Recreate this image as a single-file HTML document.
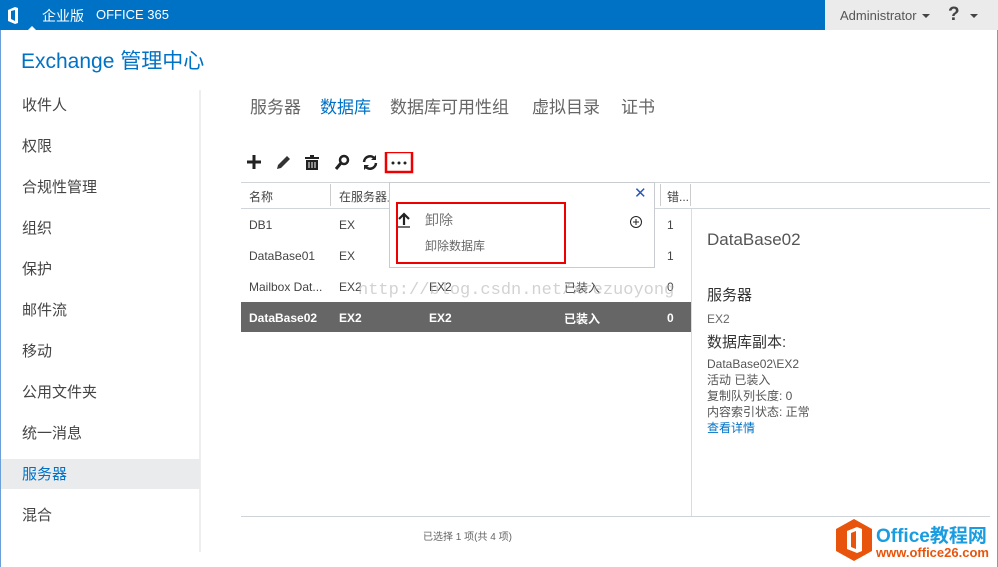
<!DOCTYPE html>
<html><head><meta charset="utf-8"><style>
*{margin:0;padding:0;box-sizing:border-box}
body{width:998px;height:567px;overflow:hidden;background:#fff;font-family:"Liberation Sans","Noto Sans CJK SC",sans-serif;position:relative;color:#333}
.a{position:absolute;white-space:nowrap}
.top{left:0;top:0;width:998px;height:30px;background:#0072c6}
.topr{left:825px;top:0;width:173px;height:30px;background:#ebebeb}
.nav{left:22px;font-size:15px;color:#444}
.tab{top:93px;font-size:17px;color:#666}
.cell{font-size:12px;color:#444}
.sel{font-weight:bold;color:#fff}
</style></head><body>
<div class="a" style="left:0;top:0;width:1px;height:567px;background:#6a9fd8"></div>
<div class="a" style="left:997px;top:0;width:1px;height:567px;background:#6a9fd8"></div>
<div class="a top"></div>
<div class="a topr"></div>
<svg class="a" style="left:7px;top:7px" width="12" height="17" viewBox="0 0 12 17"><path d="M1 3 L8 0 L11 1 L11 16 L8 17 L1 14 Z M4 4 L4 12 L8 14 L8 3 Z" fill="#fff" fill-rule="evenodd"/></svg>
<div class="a" style="left:42px;top:6px;font-size:14px;color:#fff">企业版</div>
<div class="a" style="left:96px;top:7px;font-size:13px;color:#fff">OFFICE 365</div>
<div class="a" style="left:28px;top:26px;width:0;height:0;border-left:4px solid transparent;border-right:4px solid transparent;border-bottom:4px solid #fff"></div>
<div class="a" style="left:840px;top:8px;font-size:13px;color:#555">Administrator</div>
<div class="a" style="left:922px;top:14px;border-left:4px solid transparent;border-right:4px solid transparent;border-top:4px solid #444"></div>
<div class="a" style="left:948px;top:4px;font-size:19px;font-weight:bold;color:#444">?</div>
<div class="a" style="left:970px;top:14px;border-left:4px solid transparent;border-right:4px solid transparent;border-top:4px solid #444"></div>
<div class="a" style="left:21px;top:45px;font-size:21px;color:#0072c6">Exchange 管理中心</div>

<div class="a" style="left:199px;top:90px;width:2px;height:462px;background:#eee"></div>
<div class="a" style="left:1px;top:459px;width:199px;height:30px;background:#eaebed"></div>
<div class="a nav" style="top:94px">收件人</div>
<div class="a nav" style="top:135px">权限</div>
<div class="a nav" style="top:176px">合规性管理</div>
<div class="a nav" style="top:217px">组织</div>
<div class="a nav" style="top:258px">保护</div>
<div class="a nav" style="top:299px">邮件流</div>
<div class="a nav" style="top:340px">移动</div>
<div class="a nav" style="top:381px">公用文件夹</div>
<div class="a nav" style="top:422px">统一消息</div>
<div class="a nav" style="top:463px;color:#0072c6">服务器</div>
<div class="a nav" style="top:504px">混合</div>

<div class="a tab" style="left:250px">服务器</div>
<div class="a tab" style="left:320px;color:#0072c6">数据库</div>
<div class="a tab" style="left:390px">数据库可用性组</div>
<div class="a tab" style="left:532px">虚拟目录</div>
<div class="a tab" style="left:621px">证书</div>

<svg class="a" style="left:244px;top:152px" width="170" height="22" viewBox="0 0 170 22">
<path d="M10 3v14M3 10h14" stroke="#222" stroke-width="3"/>
<path d="M33 17l1-4 9-9 3 3-9 9z" fill="#333"/>
<path d="M61 6h14M66 4h4" stroke="#222" stroke-width="2"/><path d="M62 8h12v10h-12z" fill="#222"/><path d="M65 10v6M68 10v6M71 10v6" stroke="#fff" stroke-width="1"/>
<circle cx="100" cy="8" r="4" fill="none" stroke="#222" stroke-width="2.5"/><path d="M97 11l-5 6" stroke="#222" stroke-width="3"/>
<path d="M120 10a6 6 0 0 1 11-3M132 11a6 6 0 0 1-11 3" fill="none" stroke="#222" stroke-width="2.5"/><path d="M132 3v5h-5zM120 18v-5h5z" fill="#222"/>
<rect x="142" y="0" width="26" height="20" fill="none" stroke="#e00" stroke-width="2.5"/>
<circle cx="149" cy="11" r="1.5" fill="#222"/><circle cx="155" cy="11" r="1.5" fill="#222"/><circle cx="161" cy="11" r="1.5" fill="#222"/>
</svg>

<div class="a" style="left:241px;top:182px;width:749px;height:1px;background:#d0d5da"></div>
<div class="a" style="left:241px;top:208px;width:749px;height:1px;background:#d0d5da"></div>
<div class="a" style="left:330px;top:184px;width:1px;height:22px;background:#ccc"></div>
<div class="a" style="left:660px;top:184px;width:1px;height:22px;background:#ccc"></div>
<div class="a" style="left:690px;top:184px;width:1px;height:22px;background:#ccc"></div>
<div class="a" style="left:691px;top:209px;width:1px;height:308px;background:#d8dcdf"></div>
<div class="a cell" style="left:249px;top:188px">名称</div>
<div class="a cell" style="left:339px;top:188px">在服务器上</div>
<div class="a cell" style="left:667px;top:188px">错...</div>

<div class="a cell" style="left:249px;top:218px">DB1</div><div class="a cell" style="left:339px;top:218px">EX</div><div class="a cell" style="left:667px;top:218px">1</div>
<div class="a cell" style="left:249px;top:249px">DataBase01</div><div class="a cell" style="left:339px;top:249px">EX</div><div class="a cell" style="left:667px;top:249px">1</div>
<div class="a cell" style="left:249px;top:280px">Mailbox Dat...</div><div class="a cell" style="left:339px;top:280px">EX2</div><div class="a cell" style="left:429px;top:280px">EX2</div><div class="a cell" style="left:564px;top:279px">已装入</div><div class="a cell" style="left:667px;top:280px">0</div>
<div class="a" style="left:241px;top:302px;width:450px;height:30px;background:#666"></div>
<div class="a cell sel" style="left:249px;top:311px">DataBase02</div><div class="a cell sel" style="left:339px;top:311px">EX2</div><div class="a cell sel" style="left:429px;top:311px">EX2</div><div class="a cell sel" style="left:564px;top:310px">已装入</div><div class="a cell sel" style="left:667px;top:311px">0</div>
<div class="a" style="left:358px;top:281px;font-family:'Liberation Mono',monospace;font-size:17px;color:rgba(180,180,180,.6)">http://blog.csdn.net/xrezuoyong</div>

<div class="a" style="left:389px;top:182px;width:266px;height:86px;background:#fff;border:1px solid #c8ccd0"></div>
<div class="a" style="left:634px;top:184px;font-size:15px;color:#2b57b0">✕</div>
<div class="a" style="left:396px;top:202px;width:170px;height:62px;border:2.5px solid #e00"></div>
<svg class="a" style="left:397px;top:210px" width="16" height="18" viewBox="0 0 16 18"><path d="M7 15V4M2 9l5-5 5 5" fill="none" stroke="#222" stroke-width="2.2"/><path d="M1 17h12" stroke="#222" stroke-width="1.3"/></svg>
<div class="a" style="left:425px;top:210px;font-size:14px;color:#777">卸除</div>
<div class="a" style="left:425px;top:237px;font-size:12px;color:#666">卸除数据库</div>
<svg class="a" style="left:629px;top:215px" width="14" height="14"><circle cx="7" cy="7" r="5.5" fill="none" stroke="#222"/><path d="M7 4v6M4 7h6" stroke="#222"/></svg>

<div class="a" style="left:707px;top:230px;font-size:17px;color:#555">DataBase02</div>
<div class="a" style="left:707px;top:284px;font-size:15px;color:#333">服务器</div>
<div class="a" style="left:707px;top:312px;font-size:12px;color:#666">EX2</div>
<div class="a" style="left:707px;top:331px;font-size:15px;color:#333">数据库副本:</div>
<div class="a" style="left:707px;top:356px;font-size:12px;color:#555;line-height:16px">DataBase02\EX2<br>活动 已装入<br>复制队列长度: 0<br>内容索引状态: 正常<br><span style="color:#0072c6">查看详情</span></div>

<div class="a" style="left:241px;top:516px;width:749px;height:1px;background:#cfd4d8"></div>
<div class="a" style="left:423px;top:528px;font-size:10px;color:#666">已选择 1 项(共 4 项)</div>

<svg class="a" style="left:834px;top:518px" width="40" height="44" viewBox="0 0 40 44"><path d="M20 1L38 11v22L20 43 2 33V11z" fill="#e8540c"/><path d="M13 13l10-4 5 2v22l-5 2-10-4z" fill="#fff"/><path d="M17 15v14l5 2V13z" fill="#e8540c"/></svg>
<div class="a" style="left:876px;top:521px;font-size:19px;font-weight:bold;color:#1a9ce0">Office教程网</div>
<div class="a" style="left:876px;top:545px;font-size:13px;font-weight:bold;color:#e8540c">www.office26.com</div>
</body></html>
